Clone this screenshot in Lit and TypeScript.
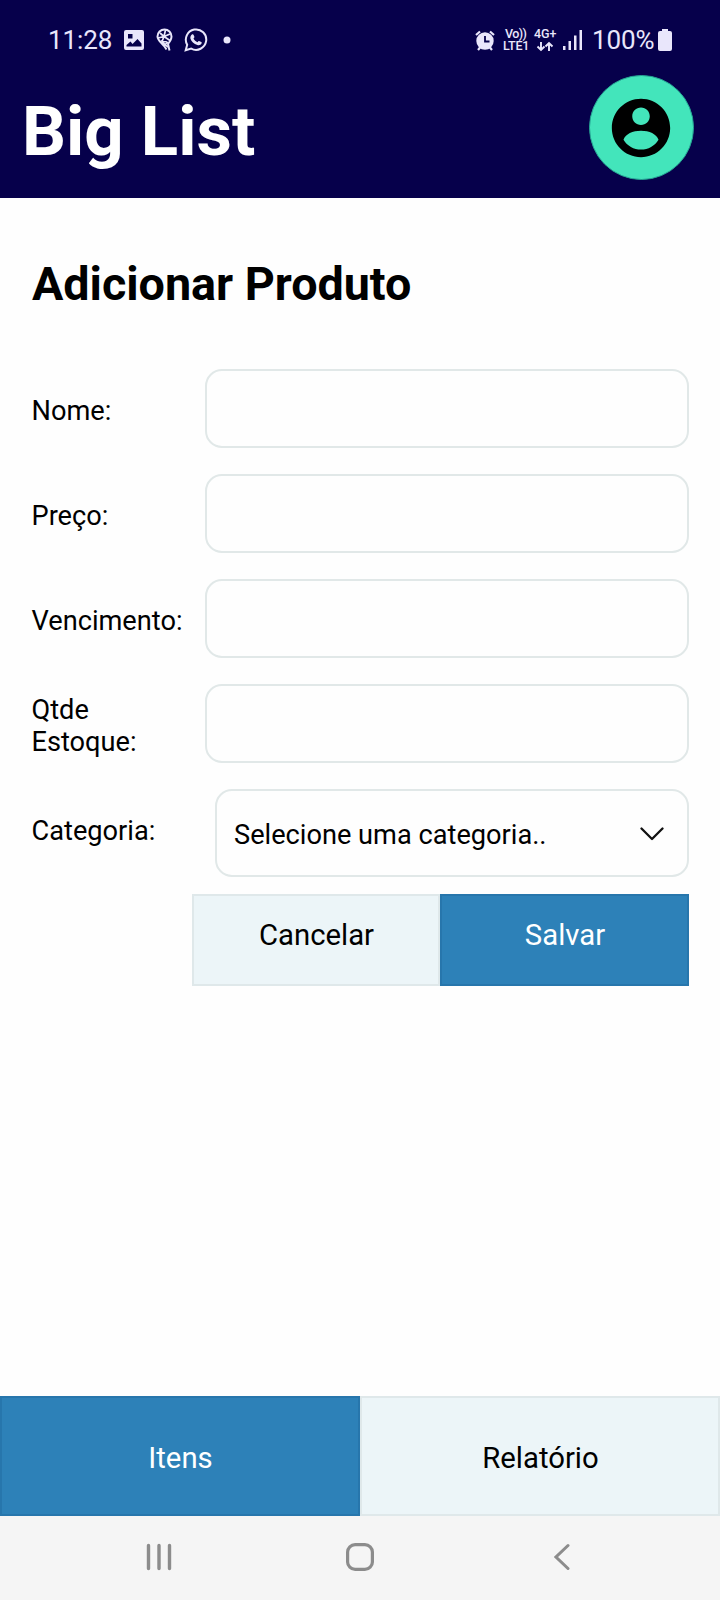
import { LitElement, html, css } from "lit";
import { customElement } from "lit/decorators.js";

const FONT = css`Roboto, "Noto Sans", sans-serif`;

@customElement("status-bar")
class StatusBar extends LitElement {
  static styles = css`
    :host { display: flex; justify-content: space-between; height: 80px; padding: 0 48px 0 48px; box-sizing: border-box; color: #e9e6fb; font-family: ${FONT}; }
    svg { display: block; flex: none; }
    .side { display: flex; align-items: center; height: 80px; }
    .clock { font-size: 26px; line-height: 32px; width: 75.500px; letter-spacing: -0.100px; white-space: nowrap; }
    .picture { margin-right: 12px; }
    .balloon { margin-right: 11px; }
    .chat { margin-right: 15px; }
    .alarm { margin-right: 8px; }
    .net { display: flex; flex-direction: column; font-weight: 500; font-size: 12.500px; line-height: 12px; white-space: nowrap; }
    .volte { width: 31px; letter-spacing: -0.200px; }
    .first { padding-left: 2px; line-height: 12px; letter-spacing: -0.600px; }
    .cell { width: 29px; }
    .arrows { margin-left: 1px; }
    .charge { font-size: 26px; line-height: 32px; width: 66px; letter-spacing: -0.100px; white-space: nowrap; }
    .signal { margin-right: 10px; }
  `;
  render() {
    return html`
      <div class="side">
        <span class="clock">11:28</span>
        <svg class="picture" width="20" height="20" viewBox="0 0 20 20">
          <path fill="currentColor" fill-rule="evenodd" d="M2 0h16a2 2 0 0 1 2 2v16a2 2 0 0 1-2 2H2a2 2 0 0 1-2-2V2a2 2 0 0 1 2-2zM4 4v4.500h4.500V4zM2.500 16.500h15v-3l-4-4.500-5 5-2-2.500-4 3.500z"/>
        </svg>
        <svg class="balloon" width="17" height="24" viewBox="0 0 17 24" fill="none" stroke="currentColor">
          <path stroke-width="2" d="M8.500 1.500a7 7 0 0 1 7 7c0 3-1.500 5-3.500 7.500l1.500 6.500M8.500 1.500a7 7 0 0 0-7 7c0 4 4 6 7 10l2 3"/>
          <path stroke-width="1.700" d="M9.500 2l-1.500 6.500 6-2.500M8 8.500l-6 1.500M8 8.500l6 4M8 8.500l-2 5M5 13l6 1M8 18l4-4M4 5l4 3.500M6 14l6 5"/>
        </svg>
        <svg class="chat" width="24" height="24" viewBox="0 0 24 24">
          <path fill="none" stroke="currentColor" stroke-width="2" d="M1.700 22.300l1.500-5.600a10.200 10.200 0 1 1 4 3.900z"/>
          <path fill="currentColor" d="M8.200 6.300c.5-.3 1-.2 1.300.4l.9 2c.2.500-.3 1.100-.9 1.800.9 1.700 2.200 2.900 4 3.700.6-.7 1-1.400 1.500-1.200l2.300 1.100c.5.300.5.800.2 1.500-.6 1.400-2.500 2-4.100 1.500-3.600-1.100-6-3.500-7-6.600-.4-1.700.6-3.500 1.800-4.200z"/>
        </svg>
        <svg width="9" height="8" viewBox="0 0 9 8"><circle cx="4" cy="4" r="3.500" fill="currentColor"/></svg>
      </div>
      <div class="side">
        <svg class="alarm" width="20" height="21" viewBox="0 0 20 21">
          <circle cx="10" cy="11" r="8.700" fill="currentColor"/>
          <path stroke="currentColor" stroke-width="2.200" d="M1 5l4-3.500M19 5l-4-3.500M3 20l2.500-3M17 20l-2.500-3"/>
          <path fill="none" stroke="#06004b" stroke-width="1.800" d="M10 6v5.500h4.500"/>
        </svg>
        <span class="net volte"><span class="first">Vo))</span><span>LTE1</span></span>
        <span class="net cell"><span>4G+</span>
          <svg class="arrows" width="20" height="12" viewBox="0 0 20 12" fill="none" stroke="currentColor" stroke-width="1.900"><path d="M6 2v8M2.500 6.500L6 10l3.500-3.500M14 11V3M10.500 6.500L14 3l3.500 3.500"/></svg>
        </span>
        <svg class="signal" width="19" height="20" viewBox="0 0 19 20" fill="currentColor"><path d="M0 16h2.500v4H0zM5.500 11H8v9H5.500zM11 5.500h2.500V20H11zM16.500 0H19v20h-2.500z"/></svg>
        <span class="charge">100%</span>
        <svg width="14" height="22" viewBox="0 0 14 22"><path fill="currentColor" d="M4 0h6v2h2a2 2 0 0 1 2 2v16a2 2 0 0 1-2 2H2a2 2 0 0 1-2-2V4a2 2 0 0 1 2-2h2z"/></svg>
      </div>`;
  }
}

@customElement("app-root")
class AppRoot extends LitElement {
  static styles = css`
    :host { display: flex; flex-direction: column; height: 1600px; background: #fefefe; font-family: ${FONT}; color: #000; }
    * { box-sizing: border-box; }
    svg { display: block; }
    .header { height: 198px; background: #06004b; }
    .brand { display: flex; justify-content: space-between; align-items: flex-start; padding: 0 26px 0 22px; margin-top: -5px; }
    .title { margin: 16px 0 0; color: #fff; font-size: 69px; line-height: 82px; font-weight: 700; white-space: nowrap; }
    .avatar { width: 105px; height: 105px; border-radius: 50%; background: #43e5bb; border: 1px solid #25a493; display: flex; align-items: center; justify-content: center; padding-right: 1px; }
    .main { flex: 1; padding: 58px 31px 0 32px; }
    .heading { margin: 0 0 57px; font-size: 46.700px; line-height: 56px; font-weight: 700; white-space: nowrap; letter-spacing: -0.020px; }
    .form { display: grid; gap: 26px; }
    .row { display: grid; grid-template-columns: 173px 1fr; align-items: center; height: 79px; }
    .label { font-size: 27.200px; line-height: 32px; padding-top: 4px; width: 160px; margin-left: -0.500px; }
    .label.top { align-self: start; margin-top: 22px; }
    .field { height: 79px; border: 2px solid #e1e8e8; border-radius: 17px; background: #fefefe; width: 100%; }
    .select { height: 88px; margin-left: 10px; align-self: start; border: 2px solid #e1e8e8; border-radius: 17px; display: flex; align-items: center; justify-content: space-between; padding: 2px 23px 0 17px; font-size: 27.200px; white-space: nowrap; }
    .choice { padding-top: 2px; }
    .actions { display: grid; grid-template-columns: 248px 249px; margin: 26px 0 0 160px; }
    .btn { display: flex; justify-content: center; height: 92px; padding-top: 22px; padding-left: 1px; font-size: 29.300px; line-height: 34px; border: 2px solid #dfe8ea; background: #ecf5f8; }
    .primary { background: #2d81b8; border-color: #2776ac; color: #fff; }
    .tabs { display: grid; grid-template-columns: 1fr 1fr; }
    .tab { height: 120px; padding-top: 43px; }
    .system { height: 84px; background: #f5f5f5; display: grid; grid-template-columns: 318px 84px 318px; justify-items: center; padding-top: 27px; }
    .back { margin-right: -1px; }
  `;
  render() {
    const fields = ["Nome:", "Preço:", "Vencimento:", "Qtde Estoque:"];
    return html`
      <header class="header">
        <status-bar></status-bar>
        <div class="brand">
          <h1 class="title">Big List</h1>
          <div class="avatar">
            <svg width="70" height="70" viewBox="0 0 24 24"><path d="M12 2C6.480 2 2 6.480 2 12s4.480 10 10 10 10-4.480 10-10S17.520 2 12 2zm0 3c1.660 0 3 1.340 3 3s-1.340 3-3 3-3-1.340-3-3 1.340-3 3-3zM6 16c.6-1.900 3.200-3.050 6-3.050s5.400 1.150 6 3.050c-1.290 2.100-3.500 3.400-6 3.400S7.290 18.100 6 16z"/></svg>
          </div>
        </div>
      </header>
      <main class="main">
        <h2 class="heading">Adicionar Produto</h2>
        <div class="form">
          ${fields.map((f) => html`<label class="row"><span class="label">${f}</span><input class="field" /></label>`)}
          <div class="row">
            <span class="label top">Categoria:</span>
            <div class="select">
              <span class="choice">Selecione uma categoria..</span>
              <svg width="24" height="14" viewBox="0 0 24 14" fill="none" stroke="#111" stroke-width="2.300" stroke-linecap="round" stroke-linejoin="round"><path d="M1.500 1.500L12 12 22.500 1.500"/></svg>
            </div>
          </div>
        </div>
        <div class="actions">
          <div class="btn">Cancelar</div>
          <div class="btn primary">Salvar</div>
        </div>
      </main>
      <nav class="tabs">
        <div class="btn tab primary">Itens</div>
        <div class="btn tab">Relatório</div>
      </nav>
      <footer class="system">
        <svg width="26" height="28" viewBox="0 0 26 28" stroke="#8c8c8c" stroke-width="3.400" stroke-linecap="round"><path d="M2.500 2.500v23M13 2.500v23M23.500 2.500v23"/></svg>
        <svg width="28" height="28" viewBox="0 0 28 28" fill="none" stroke="#8c8c8c" stroke-width="3.200"><rect x="1.600" y="1.600" width="24.800" height="24.800" rx="7.500"/></svg>
        <svg class="back" width="16" height="28" viewBox="0 0 16 28" fill="none" stroke="#8c8c8c" stroke-width="3" stroke-linecap="round"><path d="M14 2.500L2 14l12 11.500"/></svg>
      </footer>`;
  }
}
